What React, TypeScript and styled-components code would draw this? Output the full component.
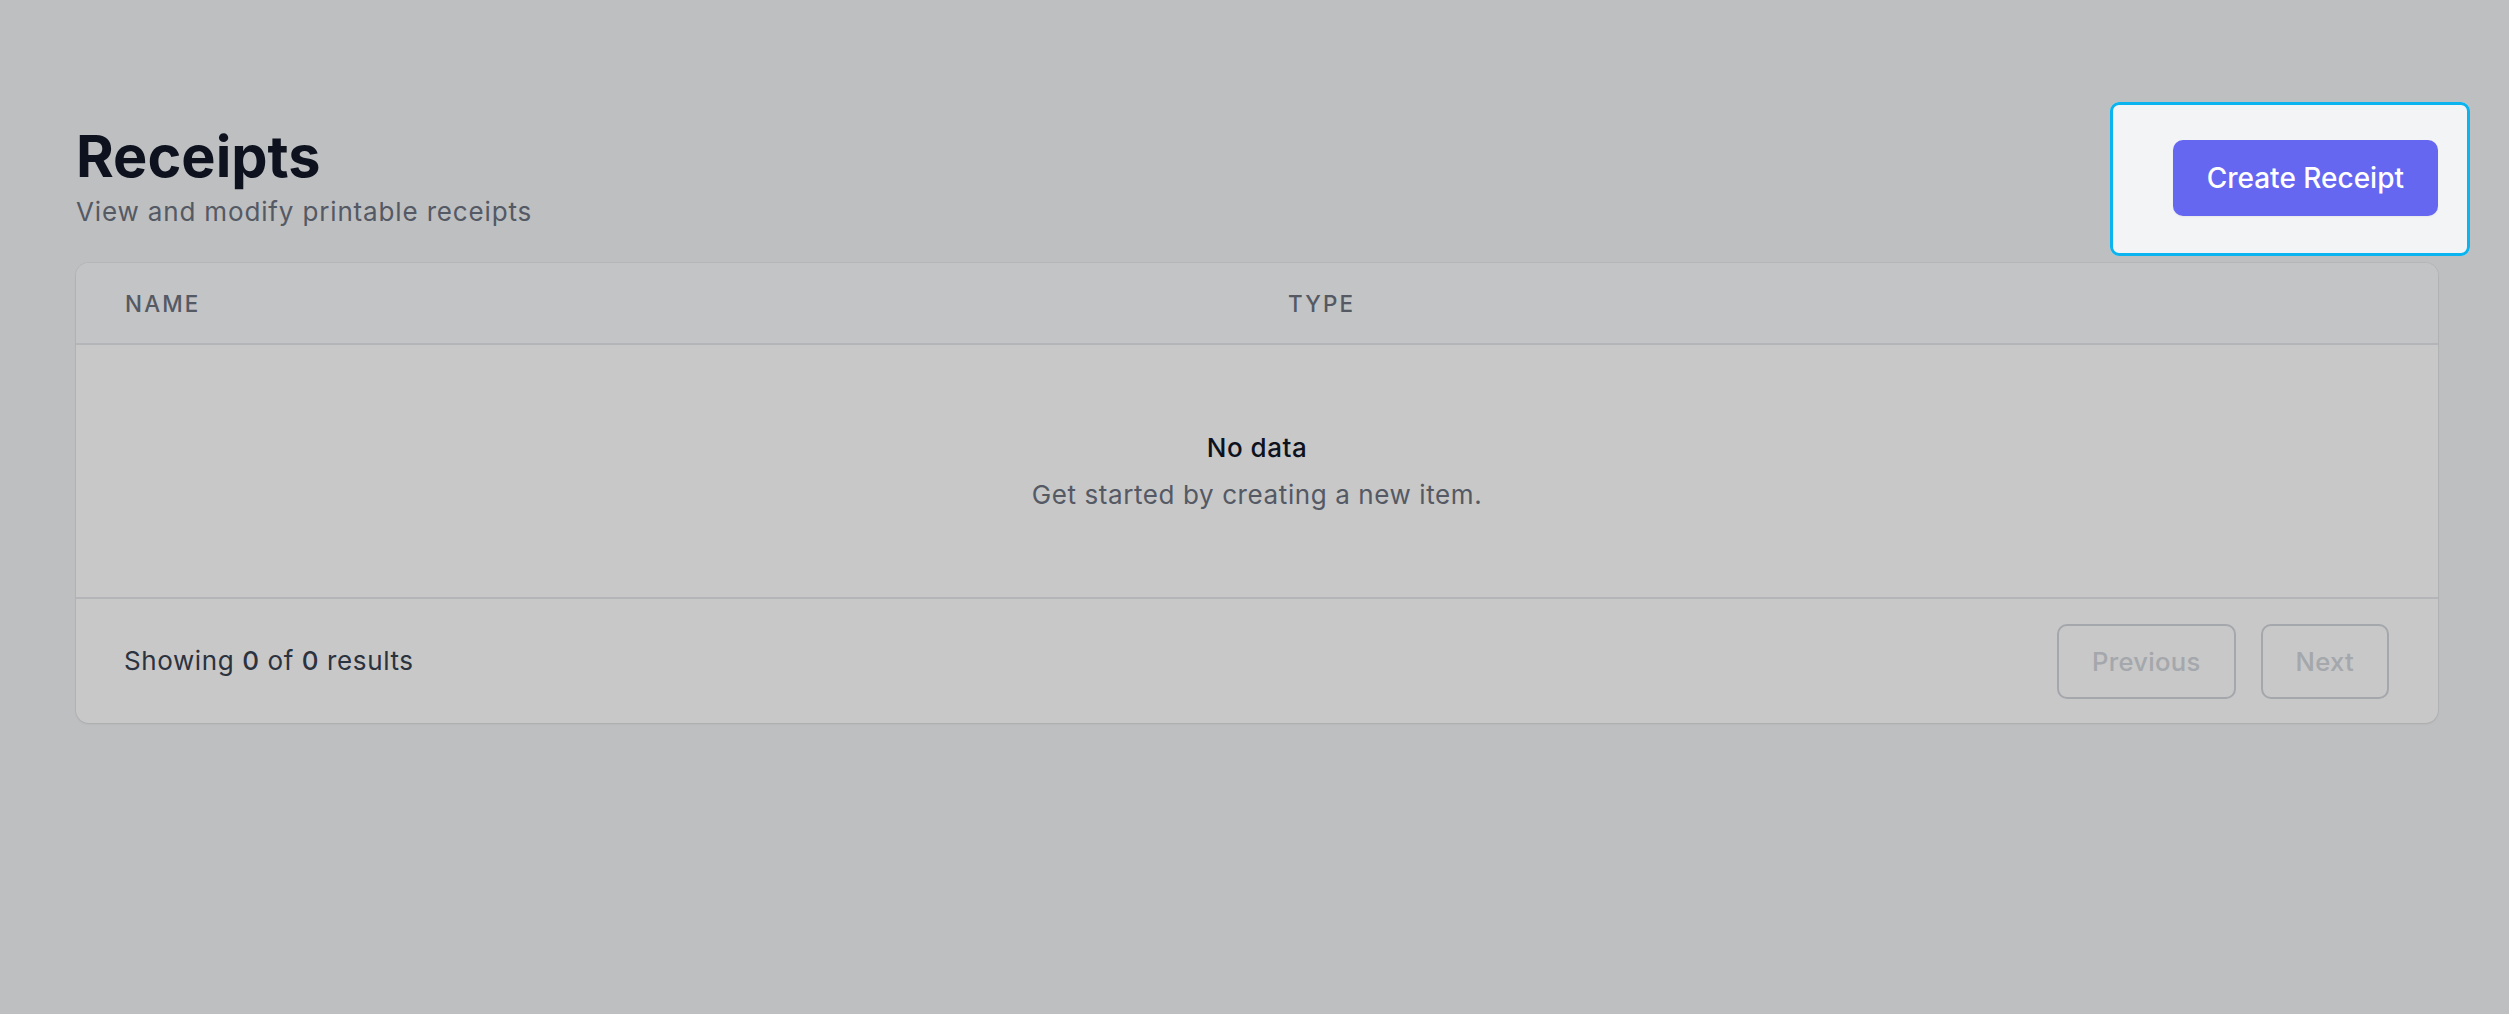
import React from "react";
import styled, { createGlobalStyle } from "styled-components";

const GlobalStyle = createGlobalStyle`
  html, body {
    margin: 0;
    padding: 0;
    background: #f3f4f6;
    font-family: Inter, "Noto Sans", "Liberation Sans", sans-serif;
  }
  * { box-sizing: border-box; }
`;

const Page = styled.main`
  min-height: 1014px;
  padding: 124px 71px 0 76px;
  overflow: hidden;
`;

const Header = styled.header`
  display: flex;
  align-items: center;
  justify-content: space-between;
`;

const HeadingBlock = styled.div`
  display: flex;
  flex-direction: column;
  gap: 5px;
`;

const Title = styled.h1`
  margin: 0;
  font-size: 57.6px;
  line-height: 64px;
  font-weight: 700;
  color: #111827;
`;

const Subtitle = styled.p`
  margin: 0;
  font-size: 26px;
  line-height: 38.4px;
  letter-spacing: 0.85px;
  color: #6b7280;
`;

const ActionArea = styled.div`
  position: relative;
  display: flex;
`;

const Spotlight = styled.div`
  position: absolute;
  left: -63px;
  right: -32px;
  top: -38px;
  bottom: -40px;
  border: 3px solid #0bb4ee;
  border-radius: 9px;
  box-shadow: 0 0 0 4000px rgba(0, 0, 0, 0.216);
  pointer-events: none;
  z-index: 10;
`;

const PrimaryButton = styled.button`
  height: 76px;
  padding: 0 34px;
  border: none;
  border-radius: 10px;
  background: #6667f1;
  color: #ffffff;
  font-family: inherit;
  font-size: 28px;
  font-weight: 500;
  box-shadow: 0 1px 2px rgba(0, 0, 0, 0.05);
  cursor: pointer;
`;

const Card = styled.section`
  margin-top: 32px;
  background: #ffffff;
  border-radius: 13px;
  overflow: hidden;
  box-shadow: 0 1px 3px rgba(0, 0, 0, 0.08), 0 0 0 1px rgba(0, 0, 0, 0.04);
`;

const TableHead = styled.div`
  display: grid;
  grid-template-columns: 1163px 1fr;
  align-items: center;
  height: 82px;
  padding: 0 49px;
  background: #f9fafb;
  border-bottom: 2px solid #e5e7eb;
`;

const HeadCell = styled.div`
  font-size: 22.4px;
  font-weight: 500;
  letter-spacing: 2.2px;
  text-transform: uppercase;
  color: #6b7280;
`;

const EmptyState = styled.div`
  padding: 84px 0 83px;
  text-align: center;
`;

const EmptyTitle = styled.div`
  font-size: 26px;
  line-height: 38.4px;
  font-weight: 500;
  letter-spacing: 0.5px;
  color: #111827;
`;

const EmptyText = styled.p`
  margin: 8px 0 0;
  font-size: 26px;
  line-height: 38.4px;
  letter-spacing: 0.6px;
  color: #6b7280;
`;

const Footer = styled.div`
  display: flex;
  align-items: center;
  justify-content: space-between;
  height: 126px;
  padding: 0 49px 0 48px;
  border-top: 2px solid #e5e7eb;
`;

const Summary = styled.p`
  margin: 0;
  font-size: 26px;
  line-height: 38.4px;
  letter-spacing: 0.6px;
  color: #374151;
`;

const Strong = styled.span`
  font-weight: 500;
`;

const Pager = styled.div`
  display: flex;
  gap: 25px;
`;

const PagerButton = styled.button`
  height: 75px;
  padding: 0 33px;
  border: 2px solid #d1d5db;
  border-radius: 10px;
  background: #ffffff;
  color: #d1d5db;
  font-family: inherit;
  font-size: 25.6px;
  font-weight: 500;
  letter-spacing: 0.3px;
  cursor: not-allowed;
`;

export default function App() {
  return (
    <>
      <GlobalStyle />
      <Page>
        <Header>
          <HeadingBlock>
            <Title>Receipts</Title>
            <Subtitle>View and modify printable receipts</Subtitle>
          </HeadingBlock>
          <ActionArea>
            <PrimaryButton type="button">Create Receipt</PrimaryButton>
            <Spotlight />
          </ActionArea>
        </Header>
        <Card>
          <TableHead>
            <HeadCell>Name</HeadCell>
            <HeadCell>Type</HeadCell>
          </TableHead>
          <EmptyState>
            <EmptyTitle>No data</EmptyTitle>
            <EmptyText>Get started by creating a new item.</EmptyText>
          </EmptyState>
          <Footer>
            <Summary>
              Showing <Strong>0</Strong> of <Strong>0</Strong> results
            </Summary>
            <Pager>
              <PagerButton type="button" disabled>
                Previous
              </PagerButton>
              <PagerButton type="button" disabled>
                Next
              </PagerButton>
            </Pager>
          </Footer>
        </Card>
      </Page>
    </>
  );
}
